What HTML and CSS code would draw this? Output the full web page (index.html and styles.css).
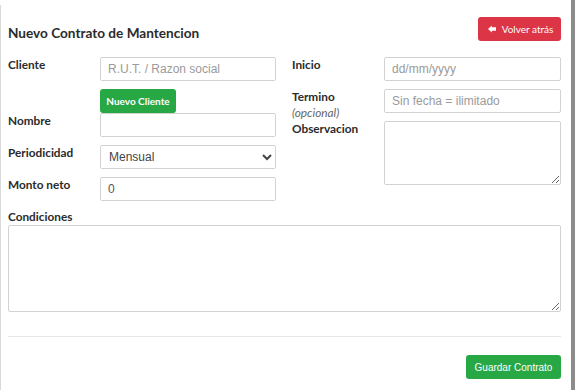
FILE: index.html
```html
<!DOCTYPE html>
<html lang="es">
<head>
<meta charset="utf-8">
<title>Nuevo Contrato de Mantencion</title>
<link rel="stylesheet" href="styles.css">
</head>
<body>
<div class="page">
  <div class="card">
    <div class="head">
      <h1 class="title">Nuevo Contrato de Mantencion</h1>
      <button class="btn btn-red" type="button">
        <svg class="ico" viewBox="0 0 8 8" width="8" height="8" aria-hidden="true"><path d="M0 4 L3.8 0.4 V2.3 H8 V5.7 H3.8 V7.6 Z" fill="#fff"/></svg>
        <span>Volver atrás</span>
      </button>
    </div>
    <div class="cols">
      <div class="col">
        <div class="row row-tight">
          <label class="lbl">Cliente</label>
          <div class="ctl">
            <input class="inp" type="text" placeholder="R.U.T. / Razon social">
            <button class="btn btn-green btn-nc" type="button">Nuevo Cliente</button>
          </div>
        </div>
        <div class="row">
          <label class="lbl">Nombre</label>
          <div class="ctl"><input class="inp" type="text"></div>
        </div>
        <div class="row">
          <label class="lbl">Periodicidad</label>
          <div class="ctl">
            <select class="inp sel">
              <option>Mensual</option>
            </select>
          </div>
        </div>
        <div class="row">
          <label class="lbl">Monto neto</label>
          <div class="ctl"><input class="inp" type="text" value="0"></div>
        </div>
      </div>
      <div class="col">
        <div class="row">
          <label class="lbl">Inicio</label>
          <div class="ctl"><input class="inp" type="text" placeholder="dd/mm/yyyy"></div>
        </div>
        <div class="row row-fixed">
          <label class="lbl">Termino<span class="opt">(opcional)</span></label>
          <div class="ctl"><input class="inp" type="text" placeholder="Sin fecha = ilimitado"></div>
        </div>
        <div class="row">
          <label class="lbl">Observacion</label>
          <div class="ctl"><textarea class="inp ta-obs"></textarea></div>
        </div>
      </div>
    </div>
    <div class="full">
      <label class="lbl">Condiciones</label>
      <textarea class="inp ta-cond"></textarea>
    </div>
    <hr class="sep">
    <div class="foot">
      <button class="btn btn-green btn-save" type="button">Guardar Contrato</button>
    </div>
  </div>
  <div class="bar"></div>
</div>
</body>
</html>
```

FILE: styles.css
```css
html, body {
  margin: 0;
  padding: 0;
  background: #fff;
}
body {
  font-family: Lato, "Open Sans", sans-serif;
  color: #333;
}
.page {
  display: flex;
  width: 581px;
  height: 390px;
  overflow: hidden;
}
.card {
  flex: none;
  width: 553px;
  padding: 0 10px 0 7px;
  margin-top: 5px;
  border-left: 1px solid #d9d9d9;
}
.bar {
  width: 4px;
  background: #8c8c8c;
  flex: none;
}
.head {
  display: flex;
  justify-content: space-between;
  align-items: flex-start;
  padding-top: 12px;
}
.title {
  margin: 6px 0 0 0;
  font-size: 13.6px;
  line-height: 20px;
  font-weight: 700;
  color: #2b2b2b;
}
.btn {
  border: 0;
  border-radius: 3px;
  color: #fff;
  cursor: pointer;
  height: 24px;
  padding: 0;
  display: inline-flex;
  align-items: center;
  justify-content: center;
}
.btn-red {
  background: #dc3545;
  width: 83px;
  font-family: Lato, sans-serif;
  font-size: 10px;
  gap: 6px;
  padding-left: 2px;
}
.ico {
  display: block;
}
.btn-green {
  background: #28a745;
}
.btn-nc {
  margin-top: 8px;
  width: 76px;
  font-family: Lato, sans-serif;
  font-weight: 700;
  font-size: 10px;
}
.btn-save {
  width: 95px;
  font-family: "Liberation Sans", Arial, sans-serif;
  font-size: 10px;
}
.cols {
  display: grid;
  grid-template-columns: 268px 269px;
  column-gap: 16px;
  margin-top: 14px;
}
.row {
  display: grid;
  grid-template-columns: 92px 1fr;
  margin-bottom: 8px;
}
.row-tight {
  margin-bottom: 0;
}
.row-fixed {
  height: 24px;
}
.ctl {
  display: flex;
  flex-direction: column;
  align-items: flex-start;
}
.lbl {
  font-size: 11.8px;
  line-height: 16px;
  font-weight: 700;
  color: #2b2b2b;
  display: block;
}
.opt {
  display: block;
  font-style: italic;
  font-weight: 400;
  color: #666;
}
.inp {
  box-sizing: border-box;
  width: 100%;
  height: 24px;
  margin: 0;
  border: 1px solid #d2d2d2;
  border-radius: 2px;
  padding: 0 7px;
  font-family: "Liberation Sans", Arial, sans-serif;
  font-size: 12px;
  color: #555;
  background: #fff;
  outline: none;
}
.inp::placeholder {
  color: #9a9a9a;
}
.sel {
  padding: 0 4px;
  color: #444;
}
.ta-obs {
  display: block;
  height: 64px;
  resize: vertical;
}
.ta-cond {
  display: block;
  height: 87px;
  resize: vertical;
}
.sep {
  margin: 24px 0 0 0;
  border: 0;
  border-top: 1px solid #e6e6e6;
  height: 0;
}
.foot {
  display: flex;
  justify-content: flex-end;
  padding-top: 18px;
}
```
